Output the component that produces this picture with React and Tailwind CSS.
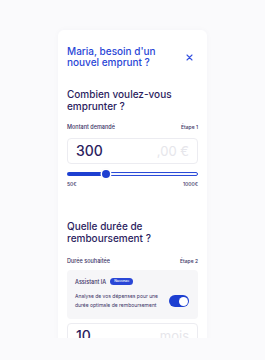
import React from "react";

const font = { fontFamily: "Inter, 'Noto Sans', sans-serif" };

const AmountInput = ({ value, suffix }) => (
  <div className="flex items-center justify-between h-[26px] rounded-[4px] border border-[#ececf1] bg-white px-[8px]">
    <span className="text-[14px] font-medium leading-none text-[#2b1d5e]">{value}</span>
    <span className="text-[13px] leading-none text-[#e6e6eb]">{suffix}</span>
  </div>
);

const SectionLabel = ({ label, step }) => (
  <div className="flex items-center justify-between text-[5.5px] leading-[6px] font-medium text-[#3b3366]">
    <span>{label}</span>
    <span className="text-[5px]">{step}</span>
  </div>
);

const App = () => {
  return (
    <div
      className="relative w-full h-[360px] overflow-hidden bg-[#fafafc] flex justify-center"
      style={font}
    >
      <div className="relative w-[149px] mt-[30px] bg-white rounded-t-[6px] px-[9px] pt-[16px] shadow-[0_0_6px_rgba(30,30,80,0.03)]">
        <div className="flex items-start justify-between">
          <h1 className="text-[10px] leading-[11px] font-medium text-[#2946d6]">
            Maria, besoin d'un
            <br />
            nouvel emprunt ?
          </h1>
          <svg width="7" height="7" viewBox="0 0 7 7" className="mt-[8px] mr-[5px]">
            <path d="M1 1 L6 6 M6 1 L1 6" stroke="#3552e0" strokeWidth="1.1" strokeLinecap="round" />
          </svg>
        </div>

        <h2 className="mt-[20px] text-[10px] leading-[12px] font-medium text-[#2b1d5e]">
          Combien voulez-vous
          <br />
          emprunter ?
        </h2>

        <div className="mt-[12px]">
          <SectionLabel label="Montant demandé" step="Étape 1" />
        </div>
        <div className="mt-[8px]">
          <AmountInput value="300" suffix=",00 €" />
        </div>

        <div className="relative mt-[6px] h-[8px] flex items-center">
          <div className="h-[4px] w-[39px] bg-[#1d3fd1] rounded-l-full" />
          <div className="h-[4px] flex-1 border border-[#2a4ad8] rounded-r-full bg-[#f4f6ff]" />
          <div className="absolute left-[35px] top-0 w-[8px] h-[8px] rounded-full bg-[#1d3fd1] ring-[1.5px] ring-white shadow-[0_0_2px_rgba(0,0,0,0.25)]" />
        </div>
        <div className="mt-[3px] flex justify-between text-[5px] leading-[6px] font-medium text-[#3b3366]">
          <span>50€</span>
          <span>1000€</span>
        </div>

        <h2 className="mt-[33px] text-[10px] leading-[12px] font-medium text-[#2b1d5e]">
          Quelle durée de
          <br />
          remboursement ?
        </h2>

        <div className="mt-[14px]">
          <SectionLabel label="Durée souhaitée" step="Étape 2" />
        </div>

        <div className="mt-[6px] rounded-[4px] bg-[#f6f6f8] px-[8px] pt-[8px] pb-[9px]">
          <div className="flex items-center gap-[4px]">
            <span className="text-[5.5px] leading-[6px] font-medium text-[#3b3366]">Assistant IA</span>
            <span className="rounded-full bg-[#2946d6] px-[4px] h-[7px] flex items-center text-[3.5px] font-medium text-white">
              Nouveau
            </span>
          </div>
          <div className="mt-[7px] flex items-center justify-between">
            <p className="text-[5px] leading-[9px] text-[#3b3366]">
              Analyse de vos dépenses pour une
              <br />
              durée optimale de remboursement
            </p>
            <div className="w-[20px] h-[12px] rounded-full bg-[#1d3fd1] flex items-center justify-end px-[1.5px] mr-[1px]">
              <div className="w-[9px] h-[9px] rounded-full bg-white" />
            </div>
          </div>
        </div>

        <div className="mt-[4px]">
          <AmountInput value="10" suffix="mois" />
        </div>
      </div>

      <div className="absolute left-0 right-0 top-[338px] bottom-0 bg-[#fafafc]" />
    </div>
  );
};

export default App;
